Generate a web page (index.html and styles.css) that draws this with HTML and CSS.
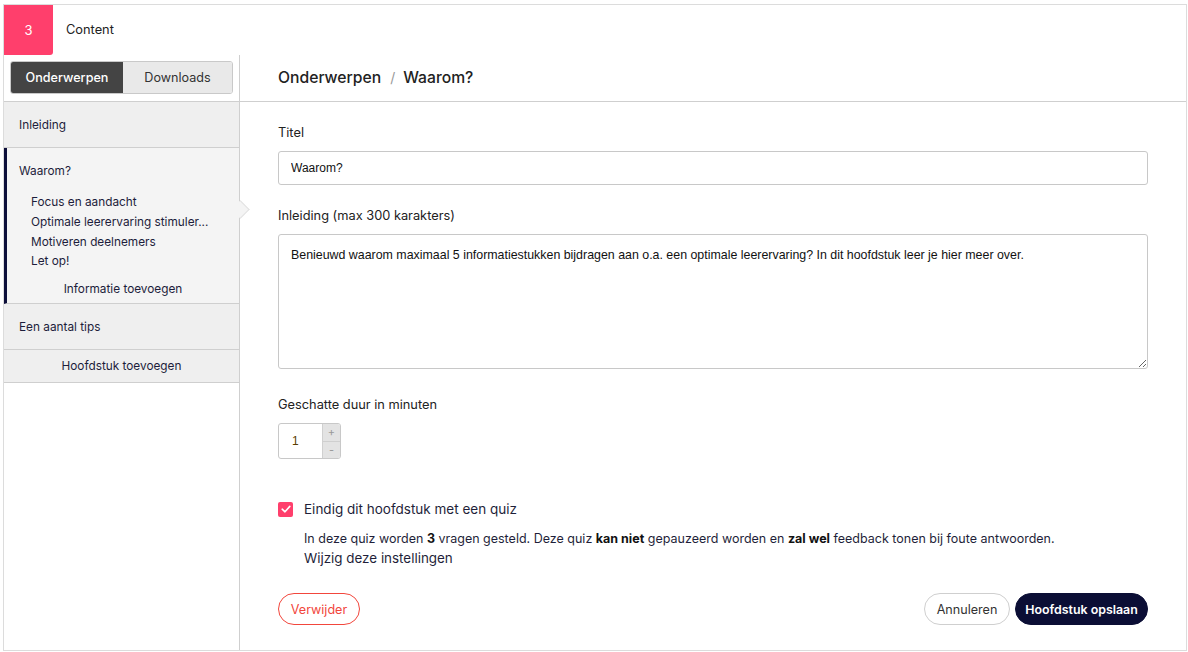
FILE: index.html
```html
<!DOCTYPE html>
<html lang="nl">
<head>
<meta charset="utf-8">
<title>Content</title>
<link rel="stylesheet" href="styles.css">
</head>
<body>
<div class="card">
  <div class="card-head">
    <div class="step">3</div>
    <div class="step-title">Content</div>
  </div>
  <div class="card-body">
    <aside class="sidebar">
      <div class="tabs-wrap">
        <div class="tabs">
          <div class="tab active">Onderwerpen</div>
          <div class="tab">Downloads</div>
        </div>
      </div>
      <div class="item">Inleiding</div>
      <div class="item open">
        <div class="item-title">Waarom?</div>
        <ul class="sub">
          <li>Focus en aandacht</li>
          <li>Optimale leerervaring stimuler...</li>
          <li>Motiveren deelnemers</li>
          <li>Let op!</li>
        </ul>
        <div class="add-info">Informatie toevoegen</div>
      </div>
      <div class="item">Een aantal tips</div>
      <div class="item add-chapter">Hoofdstuk toevoegen</div>
    </aside>
    <main class="main">
      <div class="crumbs"><span>Onderwerpen</span><span class="sep">/</span><span>Waarom?</span></div>
      <div class="form">
        <label class="label">Titel</label>
        <input class="input" type="text" value="Waarom?">
        <label class="label gap">Inleiding (max 300 karakters)</label>
        <textarea class="textarea">Benieuwd waarom maximaal 5 informatiestukken bijdragen aan o.a. een optimale leerervaring? In dit hoofdstuk leer je hier meer over.</textarea>
        <label class="label gap2">Geschatte duur in minuten</label>
        <div class="number">
          <div class="num-val">1</div>
          <div class="stepper"><span>+</span><span>-</span></div>
        </div>
        <div class="check-row">
          <span class="checkbox"><svg viewBox="0 0 14 14" width="14" height="14"><path d="M3.2 7.2 L6 9.8 L10.8 4.4" fill="none" stroke="#fff" stroke-width="1.6" stroke-linecap="round" stroke-linejoin="round"/></svg></span>
          <span class="check-label">Eindig dit hoofdstuk met een quiz</span>
        </div>
        <div class="quiz-info">
          <p class="desc">In deze quiz worden <b>3</b> vragen gesteld. Deze quiz <b>kan niet</b> gepauzeerd worden en <b>zal wel</b> feedback tonen bij foute antwoorden.</p>
          <p class="edit">Wijzig deze instellingen</p>
        </div>
        <div class="actions">
          <button class="btn danger">Verwijder</button>
          <div class="right">
            <button class="btn ghost">Annuleren</button>
            <button class="btn primary">Hoofdstuk opslaan</button>
          </div>
        </div>
      </div>
    </main>
  </div>
</div>
</body>
</html>
```
FILE: styles.css
```css
* { box-sizing: border-box; }
html, body { margin: 0; background: #fff; }
body {
  padding: 4px 1px 1px 3px;
  font-family: Inter, "Noto Sans", sans-serif;
  color: #222;
}
.card {
  height: 647px;
  border: 1px solid #dcdcdc;
  display: flex;
  flex-direction: column;
}
.card-head {
  height: 50px;
  display: flex;
  align-items: center;
  flex: none;
}
.step {
  width: 49px;
  height: 50px;
  background: #ff3f6c;
  color: #fff;
  font-size: 13px;
  display: flex;
  align-items: center;
  justify-content: center;
  border-bottom-right-radius: 3px;
  padding-bottom: 1px;
}
.step-title { margin-left: 13px; font-size: 12.8px; color: #222; padding-bottom: 1px; }
.card-body { flex: 1; display: flex; min-height: 0; }
.sidebar {
  width: 236px;
  flex: none;
  border-right: 1px solid #cfcfcf;
  font-size: 11.8px;
  color: #1d1d3b;
}
.tabs-wrap {
  height: 47px;
  padding: 6px 6px 0 6px;
  border-bottom: 1px solid #cfcfcf;
}
.tabs {
  display: flex;
  height: 33px;
  border: 1px solid #c9c9c9;
  border-radius: 3px;
  overflow: hidden;
  width: 223px;
}
.tab {
  flex: 1;
  display: flex;
  align-items: center;
  justify-content: center;
  font-size: 12.6px;
  color: #333;
  background: #e9e9e9;
}
.tab.active { background: #444; color: #fff; font-weight: 500; flex: 0 0 112px; }
.item {
  height: 46px;
  padding: 0 15px;
  display: flex;
  align-items: center;
  background: #efefef;
  border-bottom: 1px solid #cfcfcf;
}
.item.open {
  height: auto;
  display: block;
  position: relative;
  background: #f4f4f4;
  border-left: 3px solid #0d0f3a;
  padding: 15px 12px 4px 12px;
}
.item.open::after {
  content: "";
  position: absolute;
  right: -8px;
  top: 55px;
  width: 12px;
  height: 12px;
  background: #f4f4f4;
  border-top: 1px solid #e2e2e2;
  border-right: 1px solid #e2e2e2;
  transform: rotate(45deg);
  z-index: 2;
}
.item-title { line-height: 16px; margin-bottom: 13px; }
.sub { list-style: none; margin: 0; padding: 0 0 0 12px; }
.sub li { line-height: 20px; height: 20px; white-space: nowrap; }
.sub li:nth-child(4) { height: 19px; line-height: 19px; }
.add-info { text-align: center; line-height: 20px; margin-top: 8px; }
.item.add-chapter { height: 33px; justify-content: center; }
.main { flex: 1; display: flex; flex-direction: column; min-width: 0; }
.crumbs {
  height: 47px;
  flex: none;
  border-bottom: 1px solid #cfcfcf;
  padding: 0 38px 1px 38px;
  display: flex;
  align-items: center;
  font-size: 15.7px;
  font-weight: 500;
  color: #222;
}
.crumbs .sep { color: #999; font-weight: 400; margin: 0 8px 0 9px; font-size: 14px; }
.form { padding: 22px 38px 0 38px; display: flex; flex-direction: column; }
.label { font-size: 12.8px; line-height: 16px; padding-top: 1px; margin-bottom: 10px; color: #222; }
.label.gap { margin-top: 22px; }
.label.gap2 { margin-top: 27px; }
.input, .textarea {
  width: 100%;
  border: 1px solid #c8c8c8;
  border-radius: 3px;
  font-family: "Liberation Sans", Arial, sans-serif;
  font-size: 12px;
  color: #111;
  padding: 0 12px;
  outline: none;
}
.input { height: 34px; }
.textarea { height: 135px; padding: 12px 12px; resize: vertical; line-height: 16px; display: block; font-size: 12.4px; }
.number {
  width: 63px;
  height: 36px;
  border: 1px solid #c8c8c8;
  border-radius: 3px;
  display: flex;
  overflow: hidden;
}
.num-val {
  flex: 1;
  display: flex;
  align-items: center;
  padding-left: 13px;
  font-size: 12px;
  font-family: "Liberation Sans", Arial, sans-serif;
  color: #5a3d00;
}
.stepper {
  width: 18px;
  display: flex;
  flex-direction: column;
  border-left: 1px solid #d0d0d0;
  background: #e3e3e3;
}
.stepper span {
  flex: 1;
  display: flex;
  align-items: center;
  justify-content: center;
  font-size: 11px;
  color: #999;
}
.stepper span + span { border-top: 1px solid #cfcfcf; }
.check-row { display: flex; align-items: center; margin-top: 41px; height: 18px; }
.checkbox {
  width: 15px;
  height: 15px;
  background: #ff3f6c;
  border-radius: 2px;
  display: flex;
  align-items: center;
  justify-content: center;
}
.check-label { margin-left: 11px; font-size: 13.5px; color: #1f1f3a; }
.quiz-info { padding-left: 26px; margin-top: 12px; color: #1f1f3a; }
.desc { margin: 0; font-size: 12.5px; line-height: 18px; }
.desc b { color: #111; font-weight: 700; }
.edit { margin: 1px 0 0 0; font-size: 13.4px; line-height: 18px; }
.actions { display: flex; justify-content: space-between; margin-top: 26px; }
.right { display: flex; gap: 5px; }
.btn {
  height: 32px;
  border-radius: 16px;
  font-family: Inter, sans-serif;
  font-size: 12.6px;
  padding: 0;
  background: #fff;
  cursor: pointer;
  white-space: nowrap;
}
.btn.danger { border: 1px solid #f2463c; color: #f2463c; width: 82px; }
.btn.ghost { border: 1px solid #cfcfcf; color: #333; width: 86px; }
.btn.primary { border: 1px solid #0b0e35; background: #0b0e35; color: #fff; font-weight: 600; width: 133px; font-size: 12.4px; }
```
